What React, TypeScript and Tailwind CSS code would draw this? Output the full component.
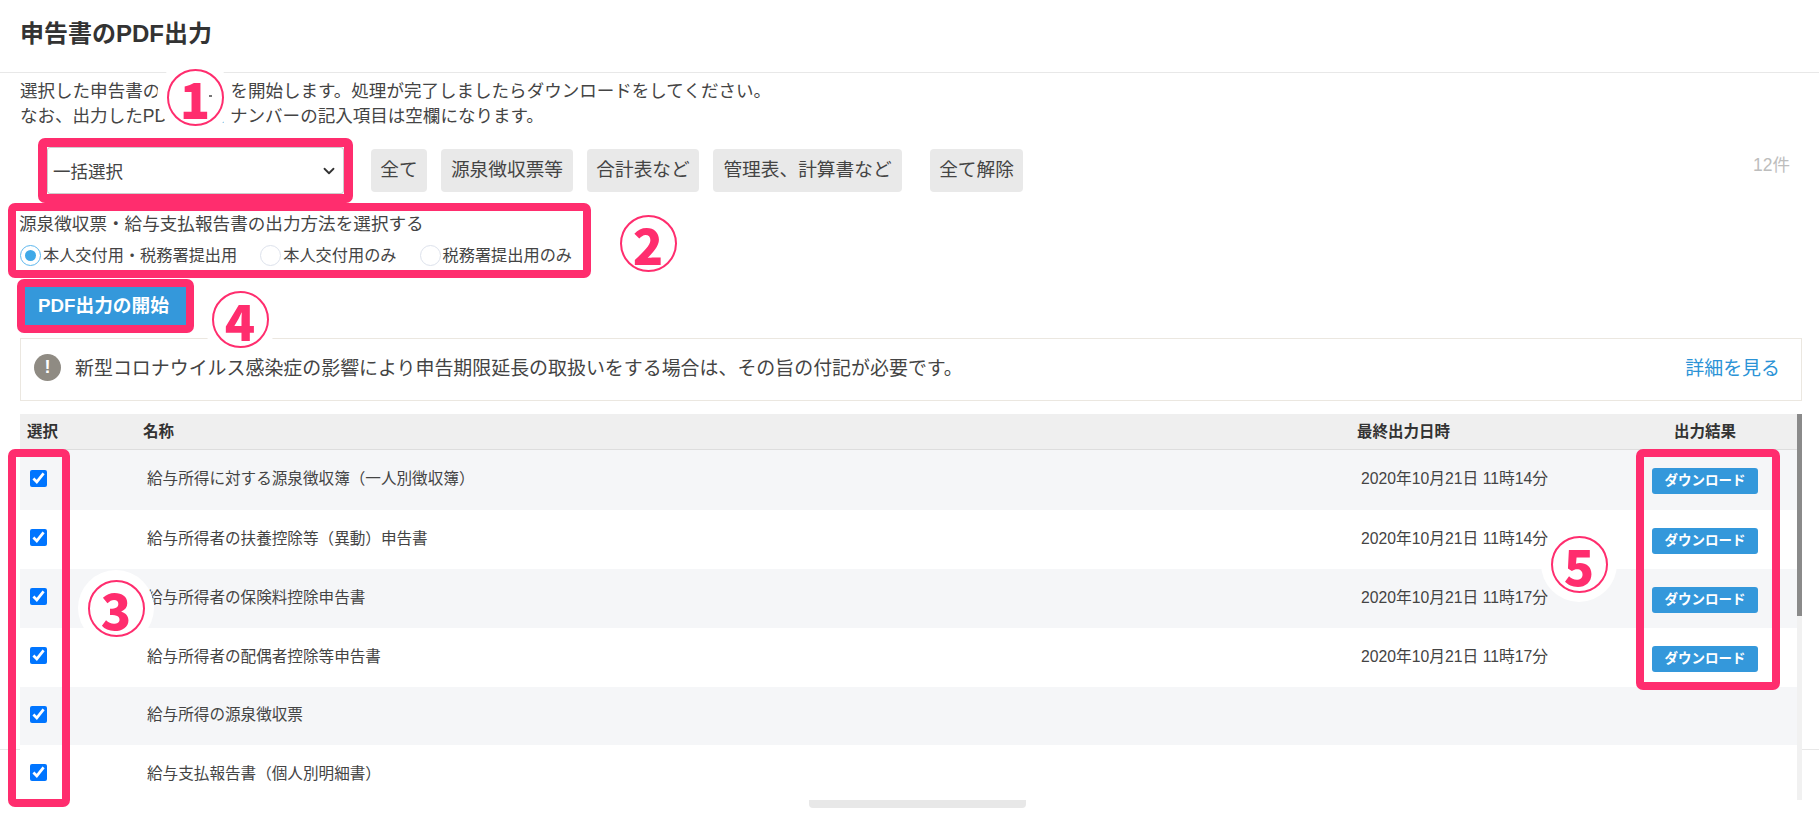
import { ReactNode } from 'react';
import { ChevronDown } from 'lucide-react';

const rows = [
  { name: '給与所得に対する源泉徴収簿（一人別徴収簿）', date: '2020年10月21日 11時14分', height: 'h-[60px]', bg: 'bg-[#f5f6f8]' },
  { name: '給与所得者の扶養控除等（異動）申告書', date: '2020年10月21日 11時14分', height: 'h-[59px]', bg: 'bg-white' },
  { name: '給与所得者の保険料控除申告書', date: '2020年10月21日 11時17分', height: 'h-[59px]', bg: 'bg-[#f5f6f8]' },
  { name: '給与所得者の配偶者控除等申告書', date: '2020年10月21日 11時17分', height: 'h-[59px]', bg: 'bg-white' },
  { name: '給与所得の源泉徴収票', date: '', height: 'h-[58px]', bg: 'bg-[#f5f6f8]' },
  { name: '給与支払報告書（個人別明細書）', date: '', height: 'h-[59px]', bg: 'bg-white' },
];

const filters = [
  { label: '全て', className: 'w-[56px] mr-[14px]' },
  { label: '源泉徴収票等', className: 'w-[132px] mr-[14px]' },
  { label: '合計表など', className: 'w-[112px] mr-[14px]' },
  { label: '管理表、計算書など', className: 'w-[189px] mr-[28px]' },
  { label: '全て解除', className: 'w-[93px]' },
];

const Marker = ({ digit, className, children }: { digit: string; className: string; children?: ReactNode }) => (
  <div className={`absolute flex h-[76px] w-[76px] items-center justify-center rounded-full bg-white ${className}`}>
    <div className="relative flex h-[57px] w-[57px] items-center justify-center rounded-full border-[2.5px] border-[#ff2d6e] font-['Noto_Sans_CJK_JP',sans-serif] text-[50px] font-black leading-none text-[#ff2d6e]">
      {digit}
      {children}
    </div>
  </div>
);

const Radio = ({ label, checked }: { label: string; checked?: boolean }) => (
  <label className="flex items-center gap-[2px]">
    <span
      className={`flex h-[21px] w-[21px] items-center justify-center rounded-full border ${
        checked ? 'border-[#5db7ee]' : 'border-[#dde2ec]'
      }`}
    >
      {checked && <span className="h-[11px] w-[11px] rounded-full bg-[#3fa9e8]" />}
    </span>
    <span>{label}</span>
  </label>
);

export default function App() {
  return (
    <div className="relative h-[819px] w-full overflow-hidden bg-white font-['Liberation_Sans','Noto_Sans_CJK_JP',sans-serif] text-[#444]">
      {/* footer line peeking out behind the table */}
      <div className="absolute left-0 right-0 top-[749px] h-px bg-[#e8e8e8]" />

      <header className="flex h-[73px] items-start border-b border-[#e8e8e8] pl-5 pt-[16px]">
        <h1 className="text-[24px] font-bold leading-[36px] text-[#333]">申告書のPDF出力</h1>
      </header>

      <div className="pl-5 pt-[6px] text-[17.55px] leading-[24.5px]">
        <p>選択した申告書のPDF出力を開始します。処理が完了しましたらダウンロードをしてください。</p>
        <p>なお、出力したPDFのマイナンバーの記入項目は空欄になります。</p>
      </div>

      <div className="flex items-start pl-[38px] pr-[29px] pt-[10px]">
        <div className="relative mr-[18px] h-[65px] w-[315px] rounded-[7px] border-[9px] border-[#ff2d6e]">
          <select className="h-full w-full appearance-none rounded-[3px] border border-[#ccc] bg-white pl-[5px] pr-[8px] pt-[4px] text-[17.5px] text-[#444]">
            <option>一括選択</option>
          </select>
          <ChevronDown className="pointer-events-none absolute right-[6px] top-[15px] h-[18px] w-[18px] text-[#333]" strokeWidth={2.4} />
        </div>
        <div className="mt-[11px] flex">
          {filters.map(f => (
            <button
              key={f.label}
              className={`flex h-[43px] items-center justify-center rounded-[4px] bg-[#e9e9e9] text-[18.7px] text-[#444] ${f.className}`}
            >
              {f.label}
            </button>
          ))}
        </div>
        <span className="ml-auto mt-[16px] text-[17.5px] leading-[22px] text-[#bdbdbd]">12件</span>
      </div>

      <div className="ml-2 h-[75px] w-[583px] rounded-[7px] border-[8px] border-[#ff2d6e] pl-[3px]">
        <div className="text-[17.6px] leading-[26px]">源泉徴収票・給与支払報告書の出力方法を選択する</div>
        <div className="ml-px mt-[8px] flex gap-[23px] text-[16.2px] leading-[21px]">
          <Radio label="本人交付用・税務署提出用" checked />
          <Radio label="本人交付用のみ" />
          <Radio label="税務署提出用のみ" />
        </div>
      </div>

      <div className="ml-[17px] mt-px h-[54px] w-[177px] rounded-[7px] border-[8px] border-[#ff2d6e]">
        <button className="h-full w-full bg-[#3498db] pr-[4px] text-[18.7px] font-bold text-white">PDF出力の開始</button>
      </div>

      <div className="ml-5 mr-[17px] mt-[5px] flex h-[63px] items-center border border-[#ebe7e0] pl-[13px] pr-[21px]">
        <span className="mb-[4px] mr-[14px] flex h-[27px] w-[27px] items-center justify-center rounded-full bg-[#8f8b83] text-[18px] font-bold text-white">
          !
        </span>
        <span className="text-[18.95px]">新型コロナウイルス感染症の影響により申告期限延長の取扱いをする場合は、その旨の付記が必要です。</span>
        <a className="ml-auto text-[18.95px] text-[#2b93d6]">詳細を見る</a>
      </div>

      <div className="relative ml-5 mr-[17px] mt-[13px] flex h-[386px] overflow-hidden">
        <div className="min-w-0 flex-1">
          <div className="grid h-9 grid-cols-[123px_1214px_256px_1fr] items-center border-b border-[#ddd] bg-[#efefef] text-[15.5px] font-bold text-[#333]">
            <span className="pl-[7px]">選択</span>
            <span>名称</span>
            <span>最終出力日時</span>
            <span className="text-center">出力結果</span>
          </div>
          {rows.map(r => (
            <div key={r.name} className={`grid grid-cols-[123px_1214px_256px_1fr] items-center ${r.height} ${r.bg}`}>
              <div className="pl-[10px]">
                <input type="checkbox" defaultChecked className="block h-[17px] w-[17px] -translate-y-[2px]" />
              </div>
              <span className="-translate-y-px pl-1 text-[15.6px]">{r.name}</span>
              <span className="-translate-y-px pl-1 text-[15.75px]">{r.date}</span>
              <div className="flex justify-center">
                {r.date && (
                  <button className="mt-[2px] h-[26px] w-[106px] rounded-[3px] bg-[#3498db] text-[13.5px] font-bold leading-[24px] text-white">
                    ダウンロード
                  </button>
                )}
              </div>
            </div>
          ))}
        </div>
        <div className="w-[5px] bg-[#f1f1f1]">
          <div className="h-[202px] bg-[#8a8a8a]" />
        </div>
      </div>

      <div className="mx-auto h-2 w-[217px] translate-x-[8px] rounded-b-[4px] bg-[#e8e8e8]" />

      {/* annotation overlays */}
      <div className="pointer-events-none absolute left-2 top-[449px] h-[358px] w-[62px] rounded-[7px] border-[8px] border-[#ff2d6e]" />
      <div className="pointer-events-none absolute left-[1636px] top-[449px] h-[241px] w-[144px] rounded-[7px] border-[8px] border-[#ff2d6e]" />
      <Marker digit="1" className="left-[157px] top-[59px]">
        <span className="absolute left-[40px] top-[24px] h-[2px] w-[3px] bg-[#777]" />
      </Marker>
      <Marker digit="2" className="left-[610px] top-[205px]" />
      <Marker digit="3" className="left-[78px] top-[570px]" />
      <Marker digit="4" className="left-[202px] top-[281px]" />
      <Marker digit="5" className="left-[1541px] top-[526px]" />
    </div>
  );
}
